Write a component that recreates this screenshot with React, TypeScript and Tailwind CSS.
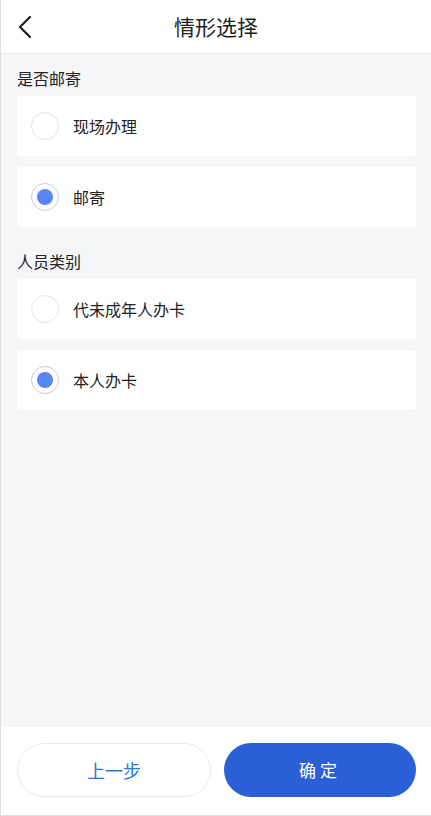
import React from 'react';

const font = { fontFamily: '"Noto Sans CJK SC", "Noto Sans", sans-serif' };

type Option = { label: string; checked: boolean };

const sections: { title: string; options: Option[] }[] = [
  {
    title: '是否邮寄',
    options: [
      { label: '现场办理', checked: false },
      { label: '邮寄', checked: true },
    ],
  },
  {
    title: '人员类别',
    options: [
      { label: '代未成年人办卡', checked: false },
      { label: '本人办卡', checked: true },
    ],
  },
];

function Radio({ checked }: { checked: boolean }) {
  return (
    <span
      className={
        checked
          ? 'flex h-[28px] w-[28px] items-center justify-center rounded-full border border-[#c3ccec] bg-white'
          : 'flex h-[28px] w-[28px] items-center justify-center rounded-full border border-[#e2e2e2] bg-white'
      }
    >
      {checked && <span className="h-[16px] w-[16px] rounded-full bg-[#5686f5]" />}
    </span>
  );
}

export default function App() {
  return (
    <div
      className="flex h-[816px] w-[431px] flex-col border-l border-b border-[#dedede] bg-[#f5f6f8]"
      style={font}
    >
      {/* Header */}
      <div className="relative flex h-[54px] shrink-0 items-center justify-center border-b border-[#ececec] bg-white">
        <svg
          className="absolute left-[16px] top-[16px]"
          width="18"
          height="22"
          viewBox="0 0 18 22"
          fill="none"
          stroke="#1f1f1f"
          strokeWidth="2.2"
          strokeLinecap="round"
          strokeLinejoin="round"
        >
          <path d="M13 1 L3 11 L13 21" />
        </svg>
        <span className="text-[21px] leading-none text-[#1f1f1f]">情形选择</span>
      </div>

      {/* Content */}
      <div className="flex-1 pl-[16px] pr-[15px]">
        {sections.map((s, i) => (
          <div key={s.title}>
            <div
              className={
                i === 0
                  ? 'pt-[12px] pb-[6px] text-[16px] leading-[24px] text-[#222]'
                  : 'pt-[22px] pb-[6px] text-[16px] leading-[24px] text-[#222]'
              }
            >
              {s.title}
            </div>
            <div className="flex flex-col gap-[11px]">
              {s.options.map((o) => (
                <div
                  key={o.label}
                  className="flex h-[60px] items-center gap-[14px] rounded-[3px] bg-white px-[14px]"
                >
                  <Radio checked={o.checked} />
                  <span className="text-[16px] text-[#222]">{o.label}</span>
                </div>
              ))}
            </div>
          </div>
        ))}
      </div>

      {/* Footer */}
      <div className="flex h-[90px] shrink-0 gap-[13px] border-t border-[#ececec] bg-white pl-[16px] pr-[15px] pt-[17px]">
        <button className="flex h-[54px] flex-1 items-center justify-center rounded-full border border-[#ebebeb] bg-white text-[18px] text-[#2478d8]">
          上一步
        </button>
        <button className="flex h-[54px] flex-1 items-center justify-center rounded-full bg-[#2a5fd5] text-[17px] tracking-[4px] text-white">
          确定
        </button>
      </div>
    </div>
  );
}
